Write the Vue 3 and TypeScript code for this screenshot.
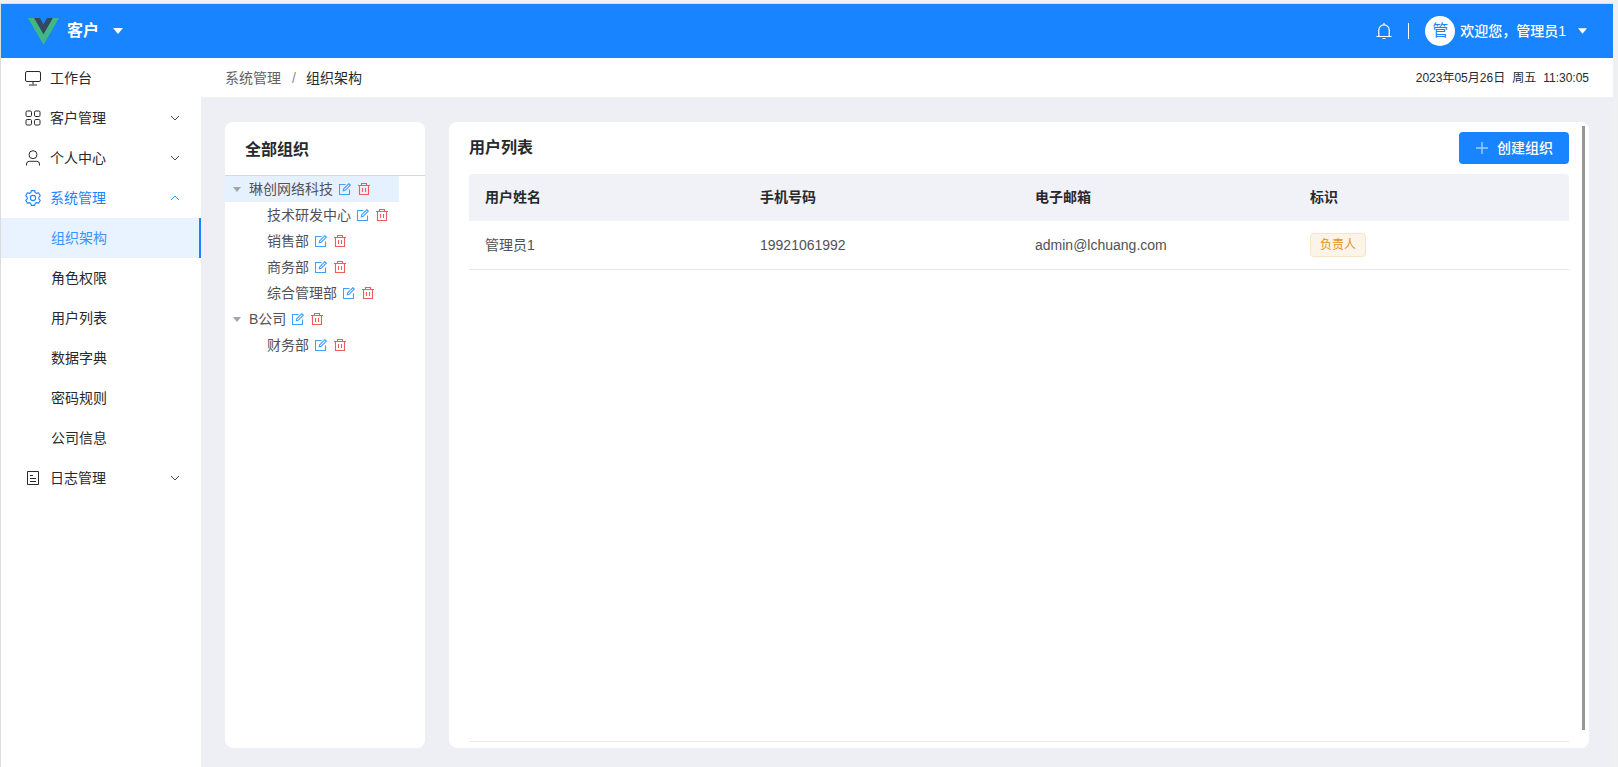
<script setup lang="ts">
import { ref } from 'vue'

interface MenuItem {
  label: string
  icon: string
  open?: boolean
  expandable?: boolean
  children?: string[]
}

interface OrgNode {
  label: string
  level: number
  parent: boolean
}

interface User {
  name: string
  phone: string
  email: string
  role: string
}

const menu = ref<MenuItem[]>([
  { label: '工作台', icon: 'monitor' },
  { label: '客户管理', icon: 'grid', expandable: true },
  { label: '个人中心', icon: 'user', expandable: true },
  {
    label: '系统管理',
    icon: 'setting',
    expandable: true,
    open: true,
    children: ['组织架构', '角色权限', '用户列表', '数据字典', '密码规则', '公司信息'],
  },
  { label: '日志管理', icon: 'log', expandable: true },
])

const activeItem = ref('组织架构')
const selected = ref('琳创网络科技')

const orgs: OrgNode[] = [
  { label: '琳创网络科技', level: 0, parent: true },
  { label: '技术研发中心', level: 1, parent: false },
  { label: '销售部', level: 1, parent: false },
  { label: '商务部', level: 1, parent: false },
  { label: '综合管理部', level: 1, parent: false },
  { label: 'B公司', level: 0, parent: true },
  { label: '财务部', level: 1, parent: false },
]

const columns = ['用户姓名', '手机号码', '电子邮箱', '标识']
const users: User[] = [
  { name: '管理员1', phone: '19921061992', email: 'admin@lchuang.com', role: '负责人' },
]
</script>

<template>
  <div class="app">
    <header class="topbar">
      <svg class="logo" viewBox="0 0 256 222" aria-hidden="true">
        <path fill="#41b883" d="M0 0l128 220.800L256 0h-51.200L128 132.480 50.560 0z" />
        <path fill="#35495e" d="M50.560 0L128 133.120 204.800 0h-47.360L128 51.200 97.920 0z" />
      </svg>
      <button class="brand" type="button">
        客户
        <svg class="caret-lg" viewBox="0 0 10 6" aria-hidden="true"><path d="M0 0h10L5 6z" fill="currentColor" /></svg>
      </button>
      <div class="account">
        <button class="bell" type="button" aria-label="通知">
          <svg viewBox="0 0 16 16" fill="none" stroke="currentColor" stroke-width="1.200" aria-hidden="true">
            <path d="M8 0v2M2.800 13V7a5.200 5.200 0 0 1 10.400 0v6M.5 13.500h15M6.500 15.500h3" />
          </svg>
        </button>
        <span class="divider"></span>
        <span class="avatar">管</span>
        <button class="welcome" type="button">
          欢迎您，管理员1
          <svg class="caret-md" viewBox="0 0 10 6" aria-hidden="true"><path d="M0 0h10L5 6z" fill="currentColor" /></svg>
        </button>
      </div>
    </header>

    <div class="body">
      <nav class="sidebar">
        <template v-for="item in menu" :key="item.label">
          <button class="item" :class="{ current: item.open }" type="button" @click="item.open = item.children ? !item.open : false">
            <svg class="item-icon" viewBox="0 0 16 16" fill="none" stroke="currentColor" aria-hidden="true">
              <template v-if="item.icon === 'monitor'">
                <rect x=".5" y="1.500" width="15" height="10" rx="1.500" />
                <path d="M8 11.500v3M4 15h8" />
              </template>
              <template v-else-if="item.icon === 'grid'">
                <rect x="1" y="1" width="5.500" height="5.500" rx="1.200" />
                <rect x="9.500" y="1" width="5.500" height="5.500" rx="1.200" />
                <rect x="1" y="9.500" width="5.500" height="5.500" rx="1.200" />
                <rect x="9.500" y="9.500" width="5.500" height="5.500" rx="1.200" />
              </template>
              <template v-else-if="item.icon === 'user'">
                <circle cx="8" cy="4.700" r="4" />
                <path d="M1.500 15.500V14A2.800 2.800 0 0 1 4.300 11.300h7.400A2.800 2.800 0 0 1 14.500 14v1.500" />
              </template>
              <template v-else-if="item.icon === 'setting'">
                <path d="M6.300.6h3.400l.5 2 1.400.8 2-.6 1.700 2.900-1.500 1.500v1.600l1.500 1.500-1.700 2.900-2-.6-1.400.8-.5 2H6.300l-.5-2-1.400-.8-2 .6L.7 10.300l1.500-1.500V7.200L.7 5.700l1.700-2.900 2 .6 1.400-.8z" stroke-linejoin="round" stroke-width="1.100" />
                <circle cx="8" cy="8" r="2.600" stroke-width="1.100" />
              </template>
              <template v-else>
                <path d="M2.500 1.500h11v13h-11zM5 5.500h3M5 8.500h6M5 11.500h6" />
              </template>
            </svg>
            <span>{{ item.label }}</span>
            <svg v-if="item.expandable" class="chevron" viewBox="0 0 10 10" fill="none" stroke="currentColor" aria-hidden="true">
              <path :d="item.open ? 'M1 7l4-4 4 4' : 'M1 3l4 4 4-4'" />
            </svg>
          </button>
          <template v-if="item.open">
            <a
              v-for="child in item.children"
              :key="child"
              class="sub"
              :class="{ active: child === activeItem }"
              href="#"
              @click.prevent="activeItem = child"
            >{{ child }}</a>
          </template>
        </template>
      </nav>

      <div class="main">
        <div class="crumbs">
          <nav class="path">
            <a href="#">系统管理</a><span class="slash">/</span><span>组织架构</span>
          </nav>
          <time class="clock"><span>2023年05月26日</span><span>周五</span><span>11:30:05</span></time>
        </div>

        <div class="content">
          <section class="card orgs">
            <h2 class="orgs-title">全部组织</h2>
            <ul class="tree">
              <li
                v-for="node in orgs"
                :key="node.label"
                class="node"
                :class="{ child: node.level === 1, selected: node.label === selected }"
                @click="selected = node.label"
              >
                <svg class="caret-sm" viewBox="0 0 8 5" aria-hidden="true"><path v-if="node.parent" d="M0 0h8L4 5z" fill="currentColor" /></svg>
                <span class="node-label">{{ node.label }}</span>
                <button class="edit" type="button" aria-label="编辑">
                  <svg viewBox="0 0 12 12" fill="none" stroke="currentColor" stroke-width="1.100" aria-hidden="true">
                    <path d="M6.500 1.500h-6v10h10v-5" />
                    <path d="M4.300 7.700l.4-1.900L9.800.7l1.500 1.500-5.100 5.100z" />
                  </svg>
                </button>
                <button class="remove" type="button" aria-label="删除">
                  <svg viewBox="0 0 12 12" fill="none" stroke="currentColor" stroke-width="1.100" aria-hidden="true">
                    <path d="M0 2.500h12M3.500 2.500v-2h5v2M1.500 2.500v9h9v-9M4.500 5v4M7.500 5v4" />
                  </svg>
                </button>
              </li>
            </ul>
          </section>

          <section class="card users">
            <div class="users-head">
              <h2>用户列表</h2>
              <button class="create" type="button">
                <svg viewBox="0 0 14 14" fill="none" stroke="currentColor" stroke-width="1.400" aria-hidden="true"><path d="M7 1v12M1 7h12" /></svg>
                创建组织
              </button>
            </div>
            <div class="table-wrap">
              <table>
                <thead>
                  <tr><th v-for="c in columns" :key="c" scope="col">{{ c }}</th></tr>
                </thead>
                <tbody>
                  <tr v-for="u in users" :key="u.phone">
                    <td>{{ u.name }}</td>
                    <td>{{ u.phone }}</td>
                    <td>{{ u.email }}</td>
                    <td><span class="tag">{{ u.role }}</span></td>
                  </tr>
                </tbody>
              </table>
            </div>
            <div class="scrollbar"></div>
          </section>
        </div>
      </div>
    </div>
  </div>
</template>

<style>
body {
  background: #eff0f2;
}
</style>

<style scoped>
.app {
  box-sizing: border-box;
  display: flex;
  flex-direction: column;
  min-height: 100vh;
  padding: 3px 5px 0 0;
  font-family: "Liberation Sans", "Noto Sans CJK SC", sans-serif;
  font-size: 14px;
  line-height: 20px;
  color: #28292c;
}
button {
  padding: 0;
  border: 0;
  background: none;
  font: inherit;
  color: inherit;
  cursor: pointer;
}
a {
  color: inherit;
  text-decoration: none;
}
h2 {
  margin: 0;
  font-size: 16px;
  font-weight: 700;
  line-height: 24px;
}
svg {
  display: block;
  flex: none;
}
.topbar {
  display: flex;
  align-items: center;
  height: 54px;
  padding: 0 26px 0 27px;
  border-top: 1px solid #dcdcdc;
  border-left: 1px solid #dcdcdc;
  background: #1984ff;
  color: #fff;
}
.logo {
  width: 31px;
  height: 27px;
}
.brand {
  display: flex;
  align-items: center;
  gap: 14px;
  margin-left: 8px;
  font-size: 16px;
  font-weight: 700;
}
.caret-lg {
  width: 10px;
  height: 6px;
}
.caret-md {
  width: 9px;
  height: 6px;
}
.account {
  display: flex;
  align-items: center;
  margin-left: auto;
}
.bell svg {
  width: 16px;
  height: 16px;
}
.divider {
  width: 1px;
  height: 16px;
  margin: 0 16px;
  background: #fff;
}
.avatar {
  width: 30px;
  border-radius: 50%;
  background: #fff;
  color: #1984ff;
  font-size: 16px;
  line-height: 30px;
  text-align: center;
}
.welcome {
  display: flex;
  align-items: center;
  gap: 12px;
  margin-left: 5px;
  font-weight: 500;
}
.body {
  display: flex;
  flex: 1;
}
.sidebar {
  width: 200px;
  flex: none;
  border-left: 1px solid #dcdcdc;
  background: #fff;
}
.item {
  display: flex;
  align-items: center;
  gap: 9px;
  width: 100%;
  height: 40px;
  padding: 0 21px 0 24px;
}
.item.current {
  color: #1984ff;
}
.item-icon {
  width: 16px;
  height: 16px;
}
.chevron {
  width: 10px;
  height: 10px;
  margin-left: auto;
  opacity: 0.85;
}
.sub {
  display: block;
  padding-left: 50px;
  line-height: 40px;
}
.sub.active {
  border-right: 2px solid #1984ff;
  background: #e9f2ff;
  color: #3a94ff;
}
.main {
  display: flex;
  flex: 1;
  flex-direction: column;
  min-width: 0;
  background: #eeeff4;
}
.crumbs {
  display: flex;
  align-items: center;
  justify-content: space-between;
  height: 39px;
  padding: 0 24px;
  background: #fff;
}
.path a {
  color: #606266;
}
.slash {
  margin: 0 10px 0 11px;
  color: #8a8d94;
}
.clock {
  display: flex;
  gap: 7px;
  font-size: 12px;
}
.content {
  display: flex;
  flex: 1;
  gap: 24px;
  padding: 25px 24px 19px;
}
.card {
  border-radius: 8px;
  background: #fff;
}
.orgs {
  width: 200px;
  flex: none;
}
.orgs-title {
  padding: 16px 20px 13px;
  border-bottom: 1px solid #d4d7e0;
}
.tree {
  width: fit-content;
  margin: 0;
  padding: 0;
  list-style: none;
  color: #505257;
}
.node {
  display: flex;
  align-items: center;
  height: 26px;
  padding: 0 11px 0 8px;
}
.node.child {
  padding-left: 26px;
}
.node.selected {
  background: #e6f1ff;
}
.caret-sm {
  width: 8px;
  height: 5px;
  color: #a0a4ad;
}
.node-label {
  margin-left: 8px;
}
.edit {
  margin-left: 6px;
  color: #409eff;
}
.remove {
  margin-left: 7px;
  color: #f05b5b;
}
.edit svg,
.remove svg {
  width: 12px;
  height: 12px;
}
.users {
  position: relative;
  display: flex;
  flex: 1;
  flex-direction: column;
  padding: 10px 20px 6px;
}
.users-head {
  display: flex;
  align-items: center;
  justify-content: space-between;
  margin-bottom: 10px;
}
.create {
  display: flex;
  align-items: center;
  gap: 8px;
  height: 32px;
  padding: 0 16px;
  border-radius: 4px;
  background: #1984ff;
  color: #fff;
  font-weight: 500;
}
.create svg {
  width: 14px;
  height: 14px;
  opacity: 0.6;
}
.table-wrap {
  flex: 1;
  border-bottom: 1px solid #e8eaee;
}
table {
  width: 100%;
  border-spacing: 0;
  table-layout: fixed;
}
th,
td {
  box-sizing: border-box;
  padding: 0 16px;
  text-align: left;
}
th {
  height: 47px;
  padding-bottom: 2px;
  background: #f1f2f7;
}
th:first-child {
  border-top-left-radius: 4px;
}
th:last-child {
  border-top-right-radius: 4px;
}
td {
  height: 49px;
  border-bottom: 1px solid #e6e6f2;
  color: #505257;
}
.tag {
  display: inline-block;
  padding: 0 9px;
  border: 1px solid #fae3c6;
  border-radius: 4px;
  background: #fdf4e9;
  color: #e09224;
  font-size: 12px;
  line-height: 22px;
}
.scrollbar {
  position: absolute;
  top: 4px;
  right: 4px;
  bottom: 18px;
  width: 3px;
  background: #979797;
}
</style>
